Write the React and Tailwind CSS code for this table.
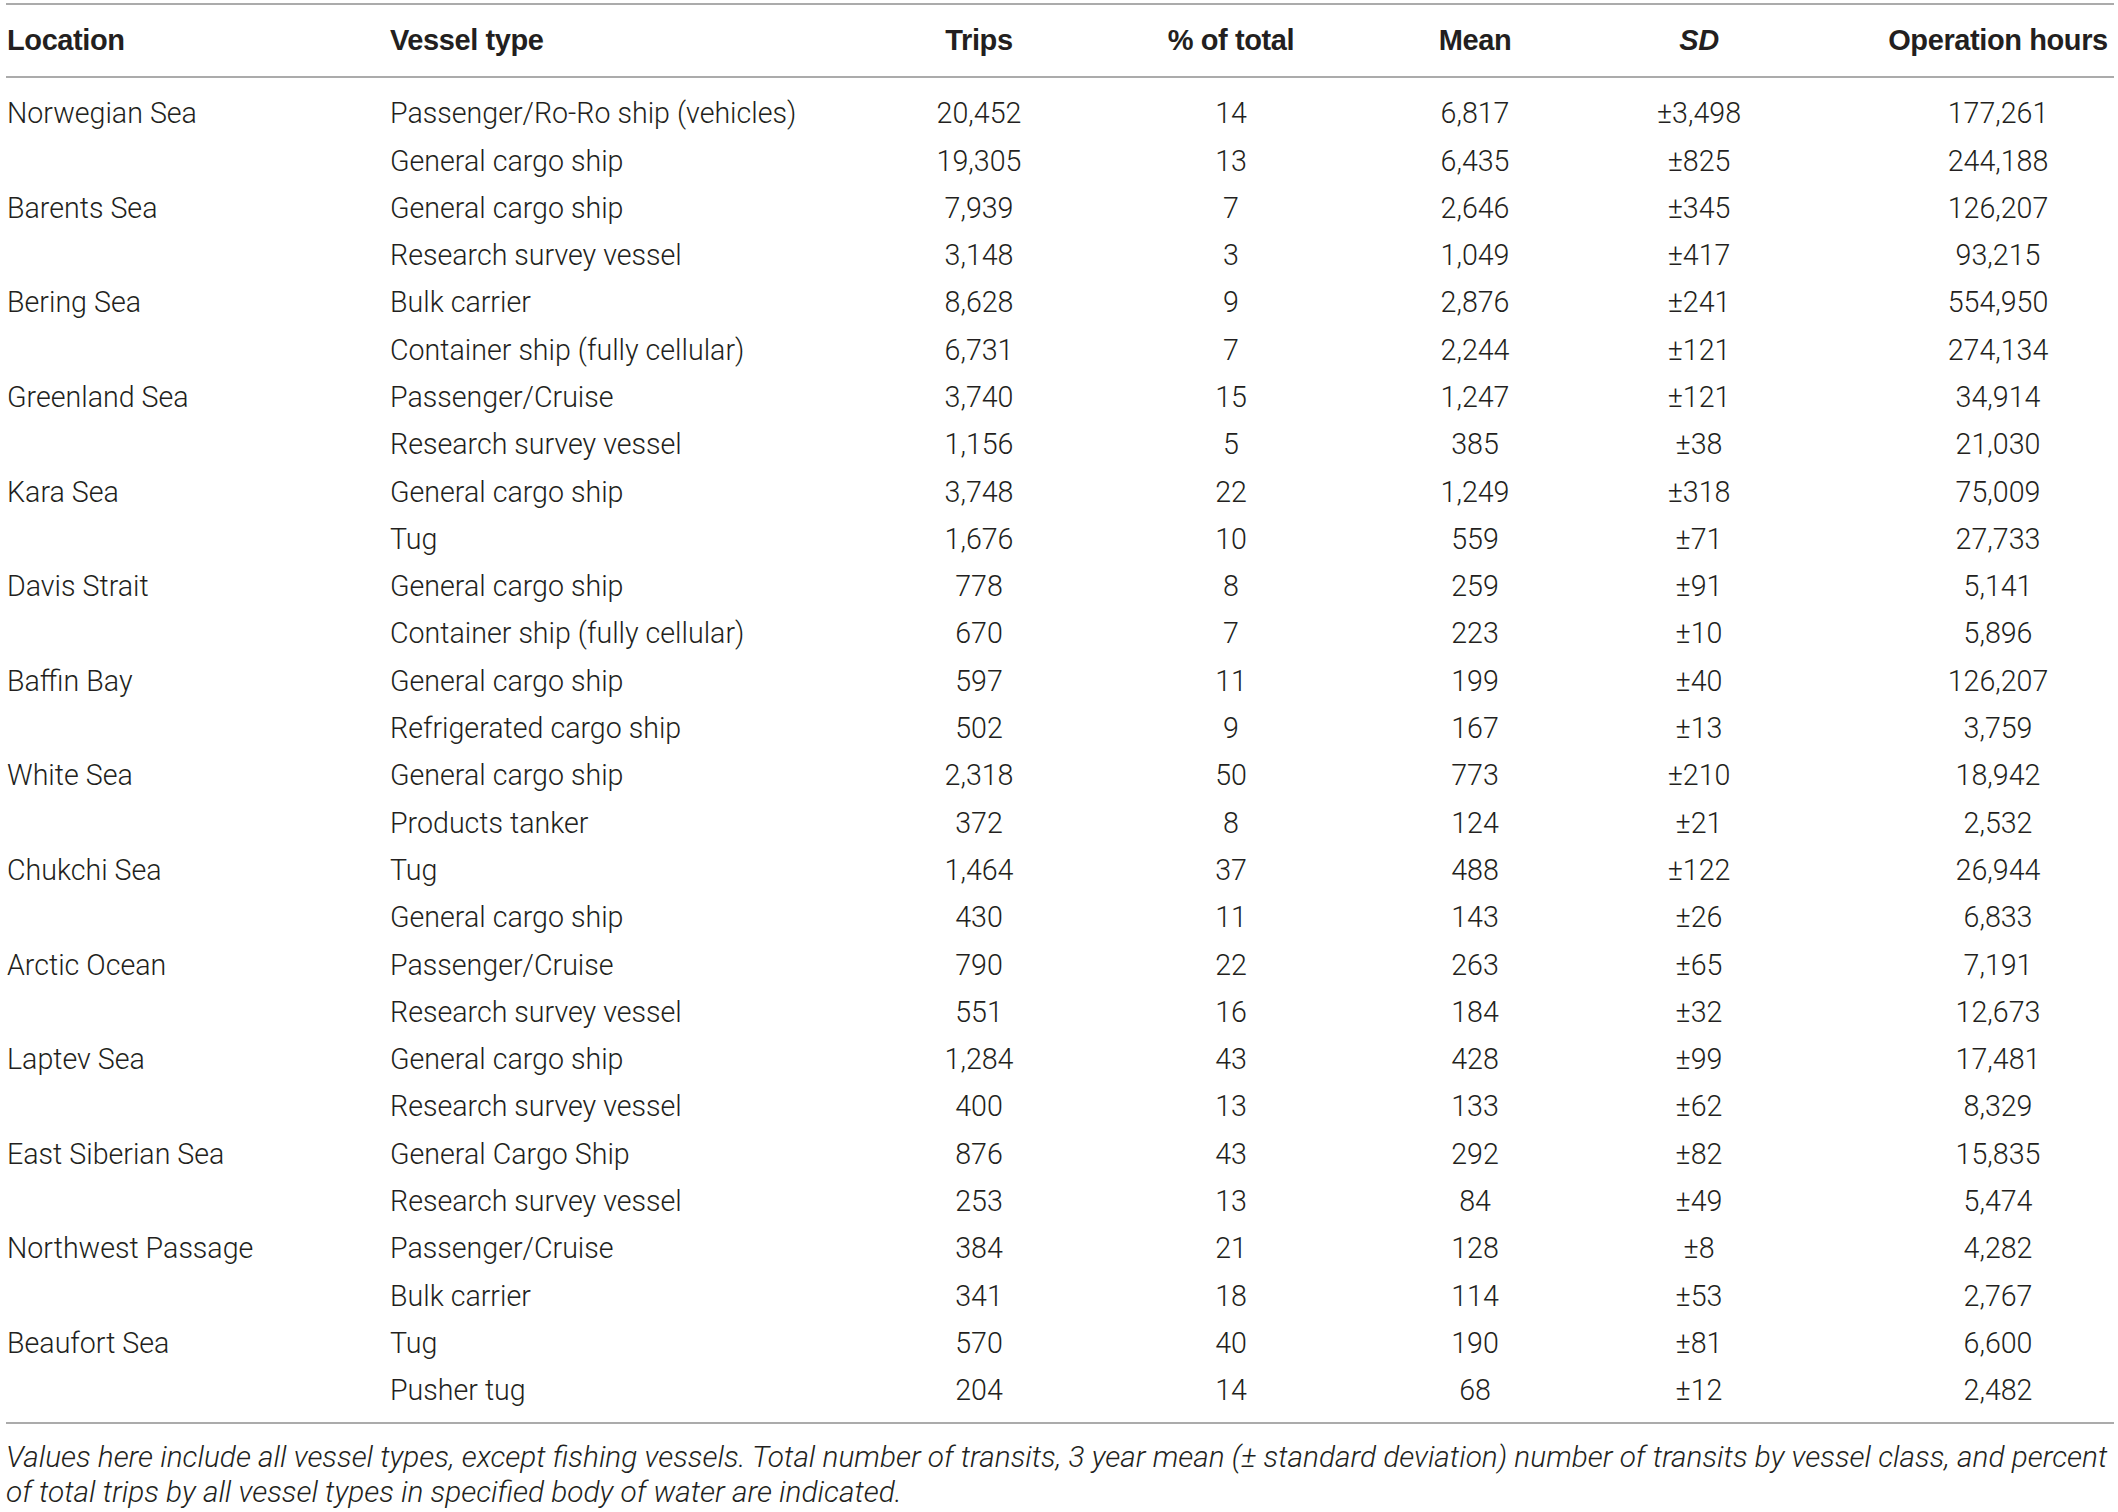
import React from "react";

const rows = [
  ["Norwegian Sea", "Passenger/Ro-Ro ship (vehicles)", "20,452", "14", "6,817", "±3,498", "177,261"],
  ["", "General cargo ship", "19,305", "13", "6,435", "±825", "244,188"],
  ["Barents Sea", "General cargo ship", "7,939", "7", "2,646", "±345", "126,207"],
  ["", "Research survey vessel", "3,148", "3", "1,049", "±417", "93,215"],
  ["Bering Sea", "Bulk carrier", "8,628", "9", "2,876", "±241", "554,950"],
  ["", "Container ship (fully cellular)", "6,731", "7", "2,244", "±121", "274,134"],
  ["Greenland Sea", "Passenger/Cruise", "3,740", "15", "1,247", "±121", "34,914"],
  ["", "Research survey vessel", "1,156", "5", "385", "±38", "21,030"],
  ["Kara Sea", "General cargo ship", "3,748", "22", "1,249", "±318", "75,009"],
  ["", "Tug", "1,676", "10", "559", "±71", "27,733"],
  ["Davis Strait", "General cargo ship", "778", "8", "259", "±91", "5,141"],
  ["", "Container ship (fully cellular)", "670", "7", "223", "±10", "5,896"],
  ["Baffin Bay", "General cargo ship", "597", "11", "199", "±40", "126,207"],
  ["", "Refrigerated cargo ship", "502", "9", "167", "±13", "3,759"],
  ["White Sea", "General cargo ship", "2,318", "50", "773", "±210", "18,942"],
  ["", "Products tanker", "372", "8", "124", "±21", "2,532"],
  ["Chukchi Sea", "Tug", "1,464", "37", "488", "±122", "26,944"],
  ["", "General cargo ship", "430", "11", "143", "±26", "6,833"],
  ["Arctic Ocean", "Passenger/Cruise", "790", "22", "263", "±65", "7,191"],
  ["", "Research survey vessel", "551", "16", "184", "±32", "12,673"],
  ["Laptev Sea", "General cargo ship", "1,284", "43", "428", "±99", "17,481"],
  ["", "Research survey vessel", "400", "13", "133", "±62", "8,329"],
  ["East Siberian Sea", "General Cargo Ship", "876", "43", "292", "±82", "15,835"],
  ["", "Research survey vessel", "253", "13", "84", "±49", "5,474"],
  ["Northwest Passage", "Passenger/Cruise", "384", "21", "128", "±8", "4,282"],
  ["", "Bulk carrier", "341", "18", "114", "±53", "2,767"],
  ["Beaufort Sea", "Tug", "570", "40", "190", "±81", "6,600"],
  ["", "Pusher tug", "204", "14", "68", "±12", "2,482"],
];

const grid = "grid grid-cols-[383px_487px_218px_286px_202px_246px_292px]";

export default function App() {
  return (
    <div
      className="w-[2118px] h-[1512px] bg-white text-[#231f20] pt-[3px]"
      style={{ fontFamily: "Roboto, 'Liberation Sans', Arial, sans-serif" }}
    >
      <div className="w-[2114px]">
        <div className="ml-[6px] h-[2px] bg-[#ababab]" />
        <div
          className={`${grid} h-[71px] items-center text-[29px] font-bold tracking-[-0.4px]`}
          style={{ fontFamily: "'Liberation Sans', Arial, sans-serif" }}
        >
          <div className="pl-[7px]">Location</div>
          <div className="pl-[7px]">Vessel type</div>
          <div className="text-center">Trips</div>
          <div className="text-center">% of total</div>
          <div className="text-center">Mean</div>
          <div className="text-center italic">SD</div>
          <div className="text-center pl-[60px]">Operation hours</div>
        </div>
        <div className="ml-[6px] h-[2px] bg-[#ababab]" />
        <div className="pt-[12px] pb-[8px] text-[28.6px] font-light">
          {rows.map((r, i) => (
            <div key={i} className={`${grid} h-[47.3px] items-center`}>
              <div className="pl-[7px] whitespace-nowrap">{r[0]}</div>
              <div className="pl-[7px] whitespace-nowrap">{r[1]}</div>
              <div className="text-center">{r[2]}</div>
              <div className="text-center">{r[3]}</div>
              <div className="text-center">{r[4]}</div>
              <div className="text-center">{r[5]}</div>
              <div className="text-center pl-[60px]">{r[6]}</div>
            </div>
          ))}
        </div>
        <div className="ml-[6px] h-[2px] bg-[#ababab]" />
        <div className="pt-[15px] pl-[6px] text-[29.8px] leading-[35px] italic font-light whitespace-nowrap">
          Values here include all vessel types, except fishing vessels. Total number of transits, 3 year mean (± standard deviation) number of transits by vessel class, and percent
          <br />
          of total trips by all vessel types in specified body of water are indicated.
        </div>
      </div>
    </div>
  );
}
